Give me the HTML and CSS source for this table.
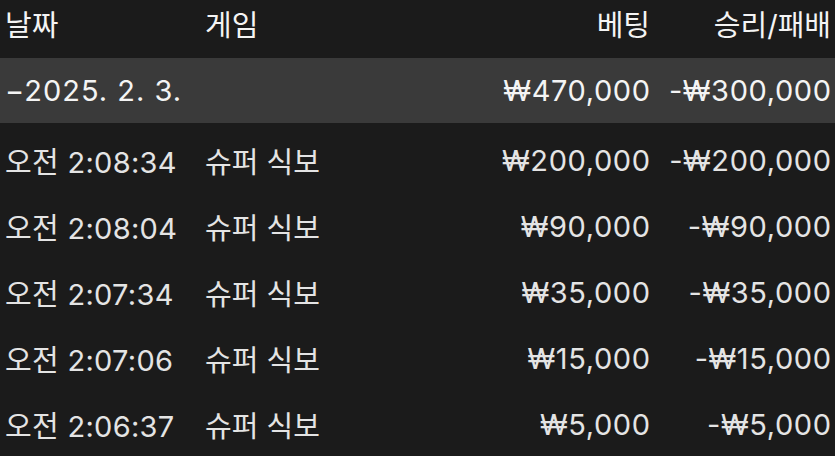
FILE: index.html
```html
<!DOCTYPE html>
<html lang="ko">
<head>
<meta charset="utf-8">
<link rel="stylesheet" href="styles.css">
</head>
<body>
<div class="table">
  <div class="row head">
    <div class="c date">날짜</div>
    <div class="c game">게임</div>
    <div class="c bet">베팅</div>
    <div class="c win">승리/패배</div>
  </div>
  <div class="row group">
    <div class="c date wide">−2025. 2. 3.</div>
    <div class="c game"></div>
    <div class="c bet">₩470,000</div>
    <div class="c win">-₩300,000</div>
  </div>
  <div class="row item">
    <div class="c date">오전 2:08:34</div>
    <div class="c game">슈퍼 식보</div>
    <div class="c bet">₩200,000</div>
    <div class="c win">-₩200,000</div>
  </div>
  <div class="row item">
    <div class="c date">오전 2:08:04</div>
    <div class="c game">슈퍼 식보</div>
    <div class="c bet">₩90,000</div>
    <div class="c win">-₩90,000</div>
  </div>
  <div class="row item">
    <div class="c date">오전 2:07:34</div>
    <div class="c game">슈퍼 식보</div>
    <div class="c bet">₩35,000</div>
    <div class="c win">-₩35,000</div>
  </div>
  <div class="row item">
    <div class="c date">오전 2:07:06</div>
    <div class="c game">슈퍼 식보</div>
    <div class="c bet">₩15,000</div>
    <div class="c win">-₩15,000</div>
  </div>
  <div class="row item">
    <div class="c date">오전 2:06:37</div>
    <div class="c game">슈퍼 식보</div>
    <div class="c bet">₩5,000</div>
    <div class="c win">-₩5,000</div>
  </div>
</div>
</body>
</html>
```
FILE: styles.css
```css
html, body {
  margin: 0;
  padding: 0;
  background: #1b1b1b;
}
body {
  width: 835px;
  height: 456px;
  overflow: hidden;
  font-family: Inter, "Noto Sans CJK KR", sans-serif;
  font-size: 29px;
  color: #e4e4e4;
}
.table {
  display: flex;
  flex-direction: column;
}
.row {
  display: grid;
  grid-template-columns: 200px 1fr 181px 181px;
  align-items: center;
  padding: 0 4px 0 5px;
}
.c { white-space: nowrap; }
.date { letter-spacing: 0.3px; }
.date.wide { letter-spacing: 1px; }
.bet, .win {
  text-align: right;
  letter-spacing: 0.6px;
  margin-right: -0.6px;
}
.head .c { letter-spacing: 0; margin-right: 0; }
.head {
  height: 58px;
  align-items: start;
  padding-top: 2px;
  box-sizing: border-box;
  color: #f4f4f4;
}
.group {
  height: 65px;
  background: #3a3a3a;
  color: #f4f4f4;
}
.item {
  height: 66px;
  padding-top: 8px;
  box-sizing: border-box;
}
```
